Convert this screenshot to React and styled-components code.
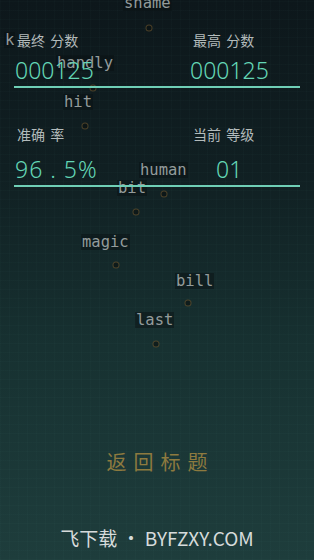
import React from "react";
import styled, { createGlobalStyle } from "styled-components";

const Global = createGlobalStyle`
  html, body { margin: 0; padding: 0; background: #0e181c; }
  #root { width: 314px; height: 560px; }
`;

const Screen = styled.div`
  position: relative;
  width: 314px;
  height: 560px;
  overflow: hidden;
  display: flex;
  flex-direction: column;
  font-family: "Noto Sans", "Noto Sans CJK SC", sans-serif;
  background:
    repeating-linear-gradient(0deg, rgba(120, 200, 190, 0.018) 0 1px, transparent 1px 9px),
    repeating-linear-gradient(90deg, rgba(120, 200, 190, 0.018) 0 1px, transparent 1px 9px),
    linear-gradient(180deg, #0d171b 0%, #101f22 30%, #173131 62%, #1e3d3c 100%);
`;

const Field = styled.div`
  position: absolute;
  inset: 0;
  z-index: 0;
`;

const Word = styled.span`
  position: absolute;
  font-family: "DejaVu Sans Mono", monospace;
  font-size: 15.5px;
  line-height: 16px;
  color: #939b9b;
  background: rgba(8, 16, 18, 0.45);
  padding: 0 1px;
`;

const Dot = styled.span`
  position: absolute;
  width: 5px;
  height: 5px;
  border-radius: 50%;
  border: 1.5px solid rgba(150, 115, 60, 0.45);
  background: rgba(10, 16, 16, 0.6);
  transform: translate(-50%, -50%);
`;

const Hud = styled.div`
  position: relative;
  z-index: 1;
  padding: 30px 14px 0 14px;
  display: flex;
  flex-direction: column;
`;

const StatRow = styled.div`
  display: grid;
  grid-template-columns: 176px 1fr;
  border-bottom: 2px solid #6fcfb6;
  margin-top: ${(p) => p.$top || 0}px;
  padding-bottom: 1px;
`;

const Stat = styled.div`
  display: flex;
  flex-direction: column;
`;

const Label = styled.div`
  font-family: "Noto Sans CJK SC", sans-serif;
  font-size: 14px;
  line-height: 20px;
  color: #b3bbbb;
  padding-left: 3px;
  word-spacing: 2px;
`;

const Value = styled.div`
  font-family: "Noto Sans", "Open Sans", sans-serif;
  font-weight: 300;
  font-size: 23px;
  line-height: 30px;
  margin-top: ${(p) => p.$gap || 5}px;
  color: #63d6b5;
  padding-left: ${(p) => p.$pad || 0}px;
  letter-spacing: ${(p) => p.$ls || 0}px;
`;

const Spacer = styled.div`
  flex: 1;
`;

const BackButton = styled.div`
  position: relative;
  z-index: 1;
  text-align: center;
  font-family: "Noto Sans CJK SC", sans-serif;
  font-size: 20px;
  line-height: 28px;
  letter-spacing: 7px;
  padding-left: 7px;
  color: #8d7a3f;
  margin-bottom: 50px;
`;

const Footer = styled.div`
  position: relative;
  z-index: 1;
  text-align: center;
  font-family: "Noto Sans CJK SC", "Noto Sans", sans-serif;
  font-size: 19px;
  line-height: 24px;
  color: #d6dbdb;
  margin-bottom: 10px;
`;

const words = [
  { t: "shame", x: 123, y: -5 },
  { t: "k", x: 4, y: 32 },
  { t: "handly", x: 56, y: 55 },
  { t: "hit", x: 63, y: 94 },
  { t: "human", x: 139, y: 162 },
  { t: "bit", x: 117, y: 180 },
  { t: "magic", x: 81, y: 234 },
  { t: "bill", x: 175, y: 273 },
  { t: "last", x: 135, y: 312 },
];

const dots = [
  [149, 28],
  [93, 88],
  [85, 126],
  [164, 194],
  [136, 212],
  [116, 265],
  [188, 303],
  [156, 344],
];

export default function App() {
  return (
    <>
      <Global />
      <Screen>
        <Field>
          {dots.map(([x, y], i) => (
            <Dot key={i} style={{ left: x, top: y }} />
          ))}
          {words.map((w) => (
            <Word key={w.t} style={{ left: w.x, top: w.y }}>
              {w.t}
            </Word>
          ))}
        </Field>
        <Hud>
          <StatRow>
            <Stat>
              <Label>最终 分数</Label>
              <Value $pad={1}>000125</Value>
            </Stat>
            <Stat>
              <Label>最高 分数</Label>
              <Value>000125</Value>
            </Stat>
          </StatRow>
          <StatRow $top={36}>
            <Stat>
              <Label>准确 率</Label>
              <Value $pad={1} $ls={1} $gap={10}>96 . 5%</Value>
            </Stat>
            <Stat>
              <Label>当前 等级</Label>
              <Value $pad={26} $gap={10}>01</Value>
            </Stat>
          </StatRow>
        </Hud>
        <Spacer />
        <BackButton>返回标题</BackButton>
        <Footer>飞下载 • BYFZXY.COM</Footer>
      </Screen>
    </>
  );
}
